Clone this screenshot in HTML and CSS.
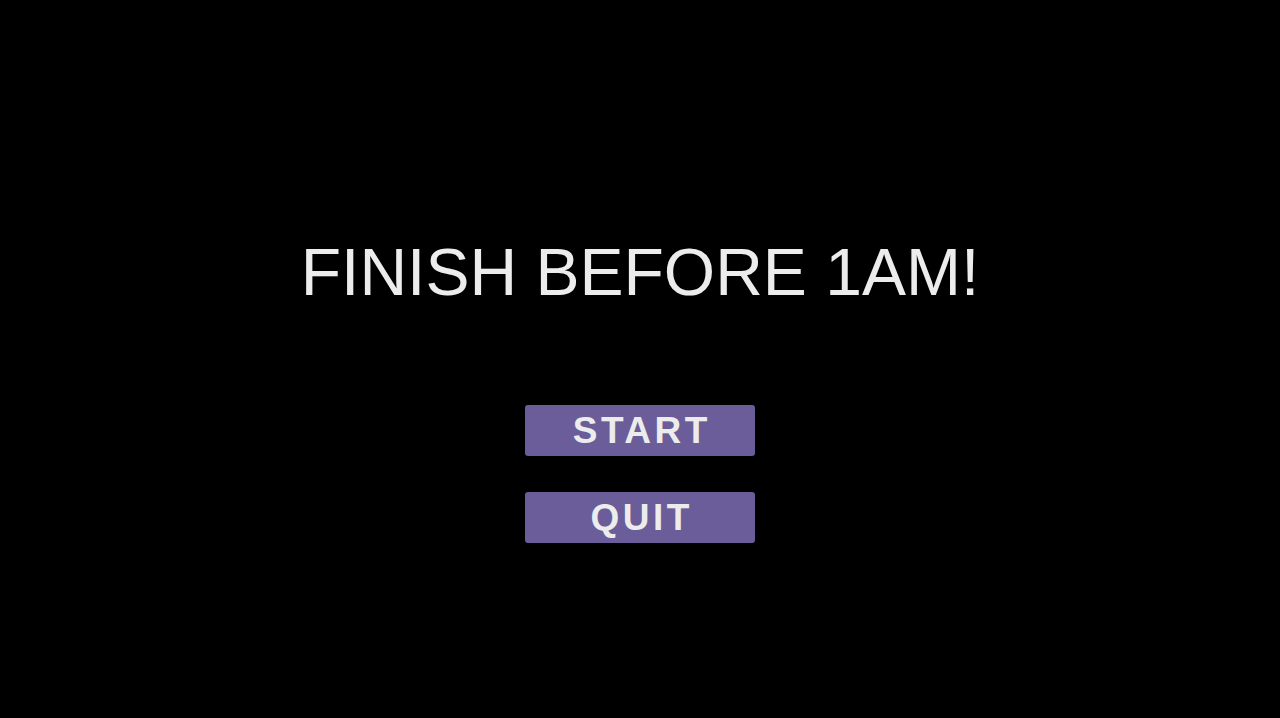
FILE: index.html
```html
<!DOCTYPE html>
<html lang="en">
<head>
<meta charset="UTF-8" />
<meta name="viewport" content="width=device-width, initial-scale=1" />
<title>Finish Before 1AM!</title>
<link rel="stylesheet" href="styles.css">
</head>
<body>

<main class="menu">
  <h1 class="title">FINISH BEFORE 1AM!</h1>
  <div class="menu-buttons">
    <button class="menu-btn" id="startBtn">START</button>
    <button class="menu-btn" id="quitBtn">QUIT</button>
  </div>
</main>

</body>
</html>
```

FILE: styles.css
```css
/* Main menu screen */
body {
  font-family: 'Liberation Sans', Arial, sans-serif;
  background: #000;
  color: #eeeeee;
  margin: 0;
  height: 100vh;
  overflow: hidden;
}

.menu {
  display: flex;
  flex-direction: column;
  align-items: center;
}

.title {
  margin: 235px 0 0;
  font-size: 66px;
  font-weight: 400;
  line-height: 74px;
  color: #ececec;
}

.menu-buttons {
  display: flex;
  flex-direction: column;
  gap: 36px;
  margin-top: 96px;
}

.menu-btn {
  width: 230px;
  height: 51px;
  padding: 0 0 0 3.5px;
  border: none;
  border-radius: 3px;
  background: #6a5d99;
  color: #ececec;
  font-family: 'Liberation Sans', Arial, sans-serif;
  font-size: 37px;
  font-weight: 700;
  letter-spacing: 3.5px;
  line-height: 51px;
  cursor: pointer;
}
.menu-btn:hover {
  background: #7668a8;
}
```
